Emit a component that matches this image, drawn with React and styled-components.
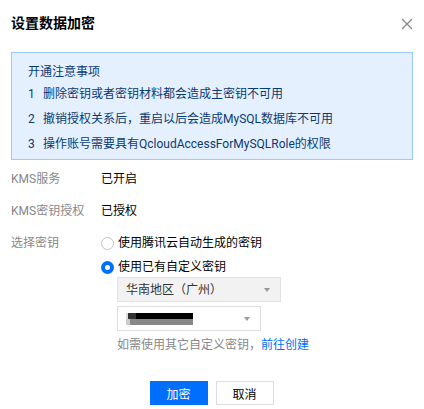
import React from "react";
import styled, { createGlobalStyle } from "styled-components";

const Global = createGlobalStyle`
  html, body { margin: 0; padding: 0; background: #fff; }
  body { font-family: Roboto, "Noto Sans CJK SC", sans-serif; font-size: 12px; color: #000; }
  * { box-sizing: border-box; }
`;

const Dialog = styled.div`
  width: 424px;
  height: 409px;
  padding: 0 11px 0 11px;
  display: flex;
  flex-direction: column;
`;

const Header = styled.div`
  height: 45px;
  display: flex;
  align-items: center;
  justify-content: space-between;
  padding-top: 1px;
`;

const Title = styled.div`
  font-size: 14px;
  font-weight: 600;
  color: #000;
  line-height: 20px;
`;

const Close = styled.button`
  border: 0;
  background: none;
  padding: 0;
  width: 12px;
  height: 12px;
  margin-top: 2px;
  display: flex;
  cursor: pointer;
`;

const Notice = styled.div`
  margin-top: 7px;
  border: 1px solid #9ccaff;
  background: #e5f0ff;
  padding: 9px 16px 2px 16px;
  color: #0b3a70;
`;

const NoticeTitle = styled.div`
  line-height: 20px;
`;

const NoticeItem = styled.div`
  display: flex;
  line-height: 25px;
`;

const Num = styled.span`
  width: 15px;
  flex: none;
`;

const Form = styled.div`
  margin-top: 9px;
  display: flex;
  flex-direction: column;
  gap: 12px;
`;

const Row = styled.div`
  display: flex;
  line-height: 20px;
`;

const Label = styled.div`
  width: 90px;
  flex: none;
  color: #888;
`;

const Value = styled.div`
  color: #000;
  flex: 1;
`;

const Options = styled.div`
  display: flex;
  flex-direction: column;
  gap: 4px;
`;

const Option = styled.label`
  display: flex;
  align-items: center;
  gap: 4px;
  line-height: 20px;
  color: #000;
`;

const Radio = styled.span`
  width: 13px;
  height: 13px;
  border-radius: 50%;
  flex: none;
  border: ${p => (p.$checked ? "4px solid #006eff" : "1px solid #c5c5c5")};
  background: #fff;
`;

const Sub = styled.div`
  padding-left: 16px;
  display: flex;
  flex-direction: column;
  gap: 4px;
`;

const Select = styled.div`
  width: ${p => p.$w}px;
  height: 25px;
  border: 1px solid ${p => (p.$disabled ? "#e2e2e2" : "#dddddd")};
  background: ${p => (p.$disabled ? "#f2f2f2" : "#fff")};
  display: flex;
  align-items: center;
  justify-content: space-between;
  padding: 0 10px 0 8px;
  color: #333;
`;

const Caret = styled.span`
  width: 0;
  height: 0;
  border-left: 3px solid transparent;
  border-right: 3px solid transparent;
  border-top: 4px solid #999;
`;

const Masked = styled.span`
  width: 67px;
  height: 12px;
  background:
    linear-gradient(to right, #ddd 0 2px, #333 2px 10px, #000 10px 67px) top / 100% 6px no-repeat,
    linear-gradient(to right, #ccc 0 4px, #888 4px 67px) bottom / 100% 6px no-repeat;
`;

const Help = styled.div`
  line-height: 20px;
  color: #888;
`;

const Link = styled.a`
  color: #006eff;
  text-decoration: none;
`;

const Footer = styled.div`
  margin-top: 26px;
  display: flex;
  justify-content: center;
  gap: 8px;
  padding-right: 1px;
`;

const Button = styled.button`
  width: 58px;
  height: 24px;
  font-family: inherit;
  font-size: 12px;
  padding: 0;
  border: 1px solid ${p => (p.$primary ? "#006eff" : "#dddddd")};
  background: ${p => (p.$primary ? "#006eff" : "#fff")};
  color: ${p => (p.$primary ? "#fff" : "#000")};
  cursor: pointer;
`;

export default function App() {
  return (
    <>
      <Global />
      <Dialog>
        <Header>
          <Title>设置数据加密</Title>
          <Close aria-label="关闭">
            <svg width="12" height="12" viewBox="0 0 12 12">
              <path d="M1 1L11 11M11 1L1 11" stroke="#888" strokeWidth="1.3" />
            </svg>
          </Close>
        </Header>
        <Notice>
          <NoticeTitle>开通注意事项</NoticeTitle>
          <NoticeItem><Num>1</Num>删除密钥或者密钥材料都会造成主密钥不可用</NoticeItem>
          <NoticeItem><Num>2</Num>撤销授权关系后，重启以后会造成MySQL数据库不可用</NoticeItem>
          <NoticeItem><Num>3</Num>操作账号需要具有QcloudAccessForMySQLRole的权限</NoticeItem>
        </Notice>
        <Form>
          <Row>
            <Label>KMS服务</Label>
            <Value>已开启</Value>
          </Row>
          <Row>
            <Label>KMS密钥授权</Label>
            <Value>已授权</Value>
          </Row>
          <Row>
            <Label>选择密钥</Label>
            <Value>
              <Options>
                <Option><Radio />使用腾讯云自动生成的密钥</Option>
                <Option><Radio $checked />使用已有自定义密钥</Option>
              </Options>
              <Sub>
                <Select $w={164} $disabled>
                  <span>华南地区（广州）</span>
                  <Caret />
                </Select>
                <Select $w={144}>
                  <Masked />
                  <Caret />
                </Select>
                <Help>
                  如需使用其它自定义密钥，<Link href="#">前往创建</Link>
                </Help>
              </Sub>
            </Value>
          </Row>
        </Form>
        <Footer>
          <Button $primary>加密</Button>
          <Button>取消</Button>
        </Footer>
      </Dialog>
    </>
  );
}
